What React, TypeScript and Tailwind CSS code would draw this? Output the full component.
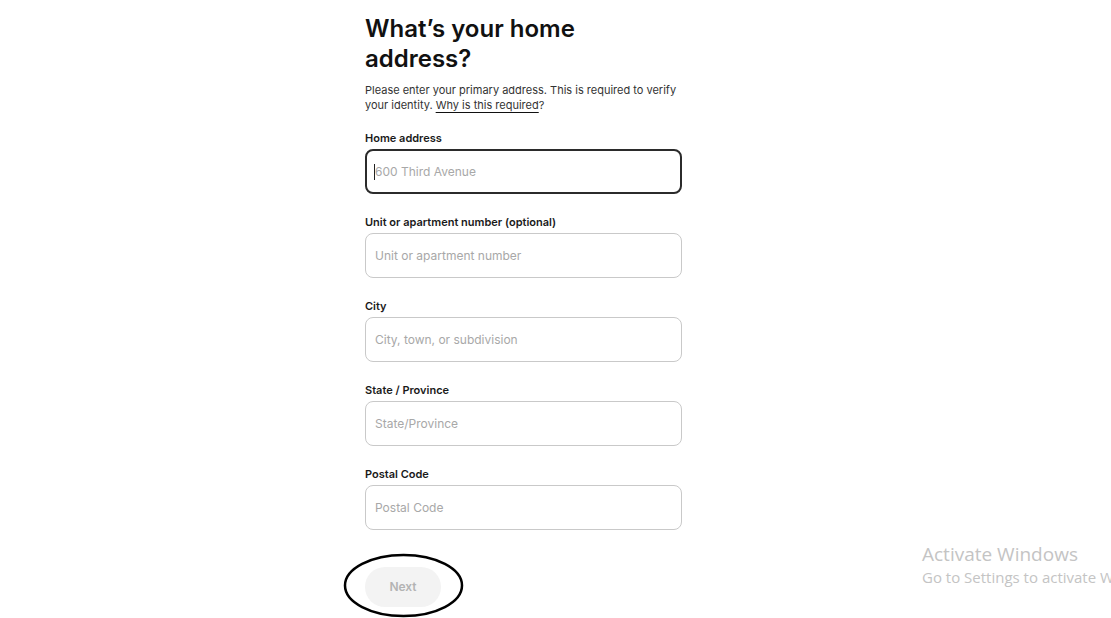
import React from 'react';

const fields = [
  { label: 'Unit or apartment number (optional)', placeholder: 'Unit or apartment number' },
  { label: 'City', placeholder: 'City, town, or subdivision' },
  { label: 'State / Province', placeholder: 'State/Province' },
  { label: 'Postal Code', placeholder: 'Postal Code' },
];

export default function App() {
  return (
    <div
      className="relative w-[1111px] h-[618px] overflow-hidden bg-white"
      style={{ fontFamily: 'Inter, "Liberation Sans", sans-serif' }}
    >
      <div className="ml-[365px] w-[317px] pt-[14px]">
        <h1 className="max-w-[260px] text-[24px] leading-[30px] font-semibold text-[#111]">
          What’s your home address?
        </h1>
        <p className="mt-[9px] text-[11px] leading-[15px] text-[#333]">
          Please enter your primary address. This is required to verify your identity.{' '}
          <span className="underline decoration-[#111] underline-offset-[3px]">Why is this required</span>?
        </p>

        <div className="mt-[18px]">
          <label className="block text-[11px] leading-[14px] font-semibold text-[#1a1a1a]">Home address</label>
          <div className="relative mt-[4px] h-[45px] rounded-[8px] border-2 border-[#2b2b2b] flex items-center px-[8px]">
            <span className="absolute left-[7px] top-[13px] h-[16px] w-px bg-[#222]" />
            <span className="text-[12px] text-[#a8a8a8]">600 Third Avenue</span>
          </div>
        </div>

        {fields.map((f) => (
          <div key={f.label} className="mt-[21px]">
            <label className="block text-[11px] leading-[14px] font-semibold text-[#1a1a1a]">{f.label}</label>
            <input
              className="mt-[4px] block w-full h-[45px] rounded-[8px] border border-[#c9c9c9] px-[9px] text-[12px] outline-none placeholder:text-[#a8a8a8]"
              placeholder={f.placeholder}
            />
          </div>
        ))}

        <button className="mt-[37px] w-[76px] h-[40px] rounded-full bg-[#f3f3f3] text-[12px] font-semibold text-[#b3b3b3]">
          Next
        </button>
      </div>

      <svg className="absolute left-0 top-0 pointer-events-none" width="1111" height="618">
        <ellipse cx="403.5" cy="585.5" rx="58.5" ry="30.5" fill="none" stroke="#000" strokeWidth="2.5" />
      </svg>

      <div
        className="absolute left-[922px] top-[542px] whitespace-nowrap text-[#c4c4c4]"
        style={{ fontFamily: '"Open Sans", "Noto Sans", sans-serif' }}
      >
        <div className="text-[19px] leading-[25px]">Activate Windows</div>
        <div className="text-[15px] leading-[21px]">Go to Settings to activate Windows.</div>
      </div>
    </div>
  );
}
